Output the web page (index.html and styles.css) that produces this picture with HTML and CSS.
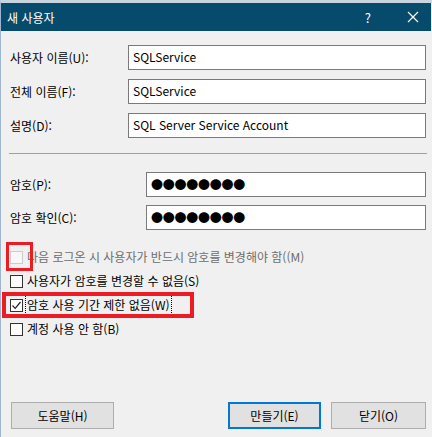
FILE: index.html
```html
<!DOCTYPE html>
<html lang="ko">
<head>
<meta charset="utf-8">
<link rel="stylesheet" href="styles.css">
</head>
<body>
<div class="window">
  <div class="titlebar">
    <span class="title">새 사용자</span>
    <span class="help">?</span>
    <svg class="close" width="12" height="12" viewBox="0 0 12 12"><path d="M1 1 L11 11 M11 1 L1 11" stroke="#fff" stroke-width="1.2"/></svg>
  </div>
  <div class="content">
    <div class="fields">
      <label class="lbl">사용자 이름(U):</label><div class="field">SQLService</div>
      <label class="lbl">전체 이름(F):</label><div class="field">SQLService</div>
      <label class="lbl">설명(D):</label><div class="field">SQL Server Service Account</div>
    </div>
    <div class="sep"></div>
    <div class="fields pw">
      <label class="lbl">암호(P):</label><div class="field dots">●●●●●●●●</div>
      <label class="lbl">암호 확인(C):</label><div class="field dots">●●●●●●●●</div>
    </div>
    <div class="checks">
      <div class="check disabled"><span class="box"></span><span class="ctext">다음 로그온 시 사용자가 반드시 암호를 변경해야 함((M)</span></div>
      <div class="check"><span class="box"></span><span class="ctext">사용자가 암호를 변경할 수 없음(S)</span></div>
      <div class="check"><span class="box checked"><svg width="11" height="11" viewBox="0 0 11 11"><path d="M1.5 5.5 L4.2 8.3 L9.5 2" fill="none" stroke="#222" stroke-width="1.2"/></svg></span><span class="ctext focus">암호 사용 기간 제한 없음(W)</span></div>
      <div class="check"><span class="box"></span><span class="ctext">계정 사용 안 함(B)</span></div>
      <div class="mark mark1"></div>
      <div class="mark mark2"></div>
    </div>
    <div class="buttons">
      <button class="btn help-btn">도움말(H)</button>
      <div class="spacer"></div>
      <button class="btn default">만들기(E)</button>
      <button class="btn close-btn">닫기(O)</button>
    </div>
  </div>
</div>
</body>
</html>
```
FILE: styles.css
```css
* { box-sizing: border-box; }
html, body { margin: 0; padding: 0; }
body {
  width: 432px;
  height: 437px;
  overflow: hidden;
  background: #f0f0f0;
  font-family: "Noto Sans CJK KR", "Noto Sans", sans-serif;
  font-size: 12px;
  color: #000;
}
.window {
  width: 432px;
  height: 437px;
  border-left: 1px solid #9fb6d0;
  border-top: 3px solid #c9d4e1;
  display: flex;
  flex-direction: column;
}
.titlebar {
  height: 28px;
  background: #074b6c;
  color: #fff;
  display: flex;
  align-items: center;
  padding-left: 6px;
  margin-right: 1px;
}
.title { font-size: 12px; flex: 1; }
.help { font-size: 13px; margin-right: 36px; }
.close { margin-right: 12px; }
.content {
  flex: 1;
  position: relative;
  padding: 14px 6px 0 9px;
  display: flex;
  flex-direction: column;
}
.fields {
  display: grid;
  grid-template-columns: 118px 298px;
  row-gap: 9px;
  align-items: center;
}
.fields.pw {
  grid-template-columns: 136px 280px;
  row-gap: 8px;
  margin-top: 18px;
}
.lbl { line-height: 25px; }
.field {
  height: 25px;
  background: #fff;
  border: 1px solid #7a7a7a;
  padding: 0 4px;
  line-height: 22px;
}
.dots {
  font-size: 12px;
  letter-spacing: -0.25px;
  line-height: 23px;
}
.sep {
  height: 1px;
  background: #a0a0a0;
  margin: 15px 0 0 -1px;
  width: 418px;
}
.checks {
  margin-top: 15px;
  display: flex;
  flex-direction: column;
}
.check {
  height: 24px;
  display: flex;
  align-items: center;
}
.box {
  width: 13px;
  height: 13px;
  border: 1px solid #333;
  background: #fff;
  margin-left: 0;
  margin-right: 3px;
  display: flex;
  align-items: center;
  justify-content: center;
}
.ctext { line-height: 16px; padding: 0 1px; }
.focus { outline: 1px dotted #000; outline-offset: 0; padding: 1px 1px; }
.disabled .box { border-color: #cccccc; background: #f7f7f7; }
.disabled .ctext { color: #6d6d6d; }
.mark {
  position: absolute;
  border: 3px solid #ec1c24;
}
.mark1 { left: 5px; top: 211px; width: 27px; height: 29px; }
.mark2 { left: 1px; top: 261px; width: 192px; height: 26px; border-width: 4px; }
.buttons {
  margin-top: auto;
  margin-bottom: 8px;
  display: flex;
  align-items: center;
}
.btn {
  height: 27px;
  background: #e1e1e1;
  border: 1px solid #adadad;
  font-family: "Noto Sans CJK KR", "Noto Sans", sans-serif;
  font-size: 12px;
  color: #000;
  padding: 0;
  margin: 0;
}
.help-btn { width: 103px; margin-left: 1px; }
.spacer { flex: 1; }
.default { width: 93px; border: 2px solid #0078d7; margin-right: 10px; }
.close-btn { width: 95px; margin-right: 0; }
```
